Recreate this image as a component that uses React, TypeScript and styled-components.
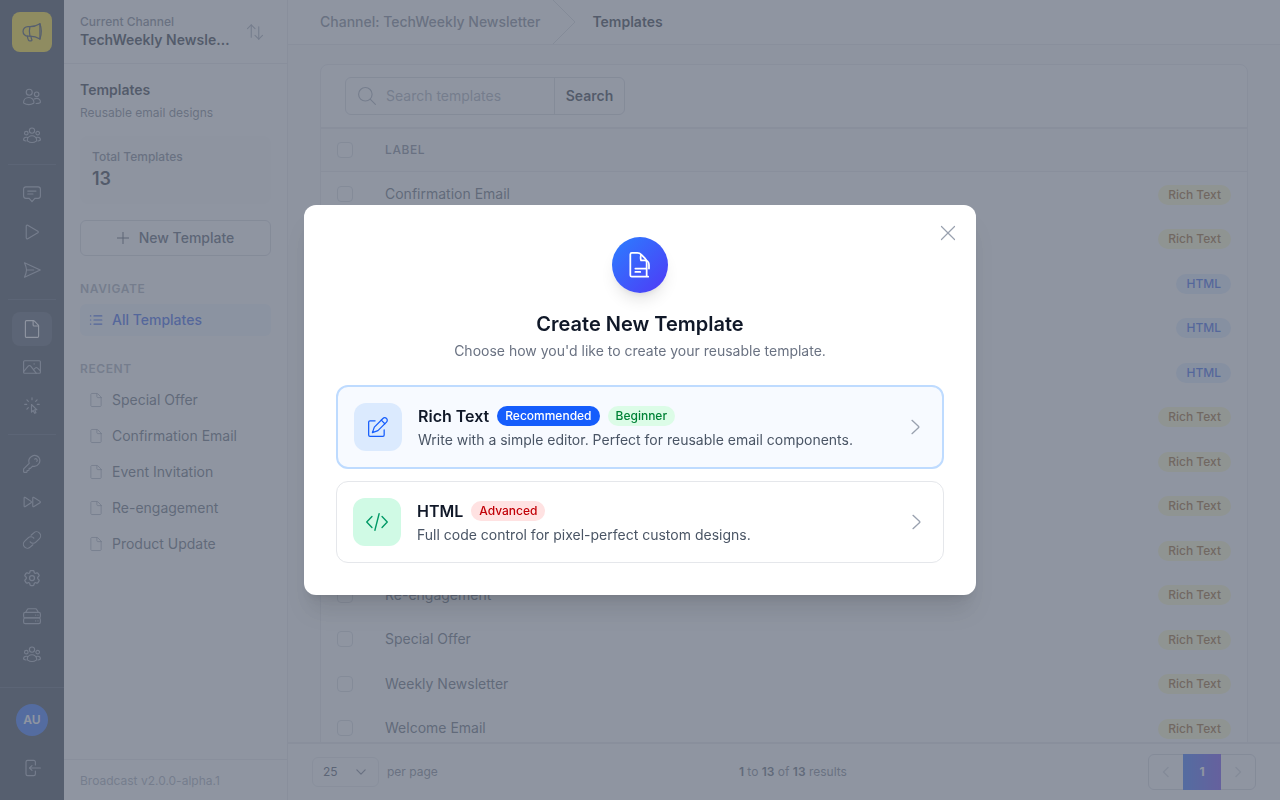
import React from "react";
import styled, { createGlobalStyle, css } from "styled-components";
import { HiOutlineCog6Tooth } from "react-icons/hi2";

const GlobalStyle = createGlobalStyle`
  *, *::before, *::after { box-sizing: border-box; }
  body {
    margin: 0;
    font-family: Inter, "Liberation Sans", sans-serif;
    font-size: 14px;
    line-height: 20px;
    color: #101828;
    background: #f9fafb;
  }
  button, input, select { font: inherit; color: inherit; margin: 0; }
  button { cursor: pointer; background: none; border: 0; padding: 0; }
  a { color: inherit; text-decoration: none; }
  h1, h2, h3, p, ul { margin: 0; padding: 0; font: inherit; list-style: none; }
`;

/* ---------- icons ---------- */

const Svg = styled.svg<{ $size: number; $weight: number }>`
  width: ${(p) => p.$size}px;
  height: ${(p) => p.$size}px;
  flex: none;
  display: block;
  overflow: visible;
  fill: none;
  stroke: currentColor;
  stroke-width: ${(p) => p.$weight};
  stroke-linecap: round;
  stroke-linejoin: round;
`;

const paths: Record<string, string[]> = {
  megaphone: [
    "M9.5 5.5H7a5.75 5.75 0 0 0 0 11.5h2.5c4.4 0 8.500 1.200 12 3.500V2c-3.500 2.300-7.600 3.500-12 3.500z",
    "M9.500 5.500c-.9 3.700-.9 7.800 0 11.500",
    "M21.500 2c2 5.500 2 13 0 18.500",
    "M6.500 17c.1 1.800.600 3.400 1.300 4.800.300.600.900.900 1.600.900h1.500c.8 0 1.300-.8.9-1.500-.6-1.200-1-2.600-1-4.100",
  ],
  users: [
    "M4.300 5.700a4 4 0 1 0 8 0 4 4 0 1 0-8 0z",
    "M15.200 8.400a3 3 0 1 0 6 0 3 3 0 1 0-6 0z",
    "M7.700 12.600c-3.900 0-6.900 2.900-6.900 6.600 0 .5.200.9.600 1.200 1.800 1.200 4 1.800 6.300 1.800s4.500-.6 6.300-1.800c.400-.3.600-.7.600-1.200 0-3.700-3-6.600-6.900-6.600z",
    "M15 14.700c.900-.6 2-.900 3.200-.9 2.800 0 5 2.200 5 4.900 0 .4-.2.8-.5.900-1.300.700-3 1.100-5.200 1.100",
  ],
  team: [
    "M8.500 6.100a3.500 3.500 0 1 0 7 0 3.500 3.500 0 1 0-7 0z",
    "M2 9.500a2.400 2.400 0 1 0 4.800 0 2.400 2.400 0 1 0-4.800 0z",
    "M17.200 9.500a2.400 2.400 0 1 0 4.800 0 2.400 2.400 0 1 0-4.800 0z",
    "M12 13c-3.600 0-6.300 2.600-6.300 5.900 0 .5.200.9.600 1.200 1.600 1.200 3.500 1.900 5.700 1.900s4.100-.7 5.700-1.900c.4-.3.6-.7.6-1.200 0-3.300-2.700-5.900-6.300-5.900z",
    "M6.300 15.400c-.6-.3-1.200-.4-1.900-.4-2 0-3.600 1.400-3.600 3.200 0 .4.200.7.500.9.700.5 1.600.8 2.700.9",
    "M17.700 15.400c.6-.3 1.200-.4 1.900-.4 2 0 3.600 1.400 3.600 3.200 0 .4-.2.7-.5.900-.7.5-1.600.8-2.700.9",
  ],
  chat: [
    "M20.200 2.500H3.800c-1.700 0-3 1.300-3 3v9.300c0 1.700 1.300 3 3 3h4.400l3.800 4.400 3.800-4.400h4.400c1.700 0 3-1.300 3-3V5.500c0-1.700-1.300-3-3-3z",
    "M6.300 8.100h11",
    "M6.300 12h7",
  ],
  play: ["M4.300 4.200v15.600c0 1 1.100 1.600 2 1.100l13.500-7.800c.8-.5.8-1.700 0-2.200L6.300 3.100c-.9-.5-2 .1-2 1.100z"],
  send: ["M2 2.300 23 12 2 21.700C3.500 18.500 4.500 15.300 4.700 12 4.500 8.700 3.500 5.500 2 2.300z", "M4.700 12h9.500"],
  file: [
    "M20.800 7.800v13.900c0 .8-.7 1.500-1.500 1.500H4.700c-.8 0-1.500-.7-1.500-1.500V2.300c0-.8.7-1.500 1.500-1.500h9.100c.4 0 .8.200 1.100.4l5.500 5.500c.2.300.4.700.4 1.100z",
    "M13.500.8v5.700c0 .8.700 1.500 1.500 1.500h5.700",
  ],
  image: [
    "M2.300 3.600h19.400c.8 0 1.500.7 1.500 1.500v13.800c0 .8-.7 1.500-1.500 1.500H2.300c-.8 0-1.500-.7-1.500-1.500V5.100c0-.8.7-1.500 1.500-1.500z",
    "M.8 18.300l6.100-7.400c.9-1.100 2.500-1.100 3.400 0l7.500 9.500",
    "M14 15.600l2.200-2.100c.9-.9 2.300-.9 3.200 0l3.800 3.600",
    "M14.700 7.900h.3",
  ],
  click: [
    "M11.300 11.300v10.200l2.300-2.300 1.900 3.900 1.800-.9-1.800-3.800h3.100z",
    "M12 2.300v2.600", "M5.200 5.200l1.900 1.900", "M2.300 11.200h2.600", "M5.200 17.500l1.900-1.900", "M18.800 5.200l-1.900 1.900", "M19 11.200h2.600",
  ],
  key: [
    "M21 3a7.700 7.700 0 0 0-12.700 8.100L1.200 18.200c-.300.300-.4.600-.4 1v3.200c0 .5.400.8.800.8h3c.5 0 .8-.4.8-.8v-1.800h1.900c.4 0 .8-.4.8-.8v-1.900h1.800l3-3A7.700 7.700 0 0 0 21 3z",
    "M15.600 5.600a1.900 1.900 0 0 1 2.800 2.800",
  ],
  forward: [
    "M1.500 6.700v10.600c0 .8.900 1.300 1.600.8l7.700-5.200c.6-.4.6-1.300 0-1.700L3.100 5.900c-.7-.5-1.600 0-1.600.8z",
    "M13 6.700v10.600c0 .8.900 1.300 1.600.8l8.100-5.200c.6-.4.6-1.300 0-1.700l-8.100-5.300c-.7-.5-1.600 0-1.600.8z",
  ],
  link: [
    "M9.600 14.400a5 5 0 0 0 7.500.500l4.600-4.500a5.200 5.200 0 0 0-7.300-8l-3.600 3.300",
    "M14.400 9.600a5 5 0 0 0-7.500-.5l-4.600 4.500a5.200 5.200 0 0 0 7.300 8l3.600-3.300",
  ],
  server: [
    "M3.700 7l2-3.700c.3-.6.900-1 1.600-1h9.400c.7 0 1.300.4 1.600 1l2 3.700",
    "M3 7.200h18c1.200 0 2.200 1 2.200 2.200v2.800c0 1.200-1 2.200-2.200 2.200H3c-1.200 0-2.200-1-2.200-2.200V9.400c0-1.200 1-2.200 2.200-2.200z",
    "M3 14.700h18c1.200 0 2.200 1 2.200 2.200V20c0 1.200-1 2.200-2.200 2.200H3c-1.200 0-2.200-1-2.200-2.200v-3.100c0-1.200 1-2.200 2.200-2.200z",
    "M16.800 10.800h.1", "M19.900 10.800h.1", "M16.800 18.500h.1", "M19.900 18.500h.1",
  ],
  logout: [
    "M16.500 8V4c0-1.200-1-2.200-2.200-2.200H6.200C5 1.800 4 2.800 4 4v16c0 1.200 1 2.200 2.200 2.200h8.100c1.200 0 2.200-1 2.200-2.200v-4",
    "M23.200 12H8.700", "M12 8.700L8.700 12l3.300 3.300",
  ],
  swap: ["M7 19V2.500", "M2 7.500l5-5 5 5", "M17 5v16.500", "M12 16.500l5 5 5-5"],
  list: ["M8.500 5h13.500", "M8.500 12h13.500", "M8.500 19h13.500", "M2.500 5h.6", "M2.500 12h.6", "M2.500 19h.6"],
  plus: ["M12 .8v22.400", "M.8 12h22.400"],
  search: ["M.8 9.700a9 9 0 1 0 18 0 9 9 0 1 0-18 0z", "M16.200 16.200l7 7"],
  close: ["M.8.8l22.400 22.400", "M23.200.8L.8 23.200"],
  right: ["M6 2l10 9.300c.5.400.5 1 0 1.400L6 22"],
  left: ["M16 3l-9 9 9 9"],
  next: ["M8 3l9 9-9 9"],
  down: ["M2 7l10 10L22 7"],
  template: [
    "M19 22H5c-.7 0-1.300-.6-1.300-1.300V3c0-.7.600-1.300 1.300-1.300h4.700c1.300 0 2.500.500 3.400 1.400l3.200 3.200c.9.9 1.400 2 1.400 3.300V22",
    "M12.900 3.400c-.5 1.600-.5 3.200 0 4.700h3.200c2 0 3.600 1.600 3.600 3.600V15",
    "M8 15h9.500", "M8 17.900h4.200",
  ],
  edit: [
    "M8.500 4.600H2.300c-.8 0-1.500.7-1.500 1.500v15.600c0 .8.700 1.500 1.500 1.500h15.600c.8 0 1.500-.7 1.500-1.500v-6.200",
    "M22.200 1.800a3 3 0 0 0-4.300 0L7.600 12.100 5.300 18.700l6.600-2.300L22.200 6.100a3 3 0 0 0 0-4.300z",
    "M15.900 3.800l4.300 4.300",
  ],
  code: ["M6.500 6L.8 12l5.700 6", "M17.500 6l5.700 6-5.700 6", "M14.300 3L9.700 21"],
};

const Icon = ({ name, size = 18, weight = 1.5 }: { name: string; size?: number; weight?: number }) => (
  <Svg $size={size} $weight={weight} viewBox="0 0 24 24" aria-hidden="true">
    {paths[name].map((d) => (
      <path key={d} d={d} />
    ))}
  </Svg>
);

/* ---------- shell ---------- */

const Shell = styled.div`
  display: flex;
  height: 100vh;
  overflow: hidden;
`;

const Rail = styled.nav`
  width: 64px;
  flex: none;
  display: flex;
  flex-direction: column;
  background: #1e2939;
`;

const Logo = styled.a`
  flex: none;
  display: grid;
  place-items: center;
  width: 40px;
  height: 40px;
  margin: 12px;
  border-radius: 8px;
  background: #fddc00;
  color: #1e2939;
`;

const RailGroups = styled.div`
  flex: 1;
  padding: 16px 8px;
`;

const RailGroup = styled.div`
  display: flex;
  flex-direction: column;
  align-items: center;
  gap: 4px;
  & + & {
    border-top: 1px solid #364153;
    margin-top: 12px;
    padding-top: 12px;
  }
`;

const RailLink = styled.a<{ $active?: boolean }>`
  display: grid;
  place-items: center;
  width: 40px;
  height: 34px;
  border-radius: 8px;
  color: #99a1af;
  ${(p) =>
    p.$active &&
    css`
      background: #364153;
      color: #ffffff;
    `}
`;

const RailFooter = styled.div`
  display: flex;
  flex-direction: column;
  align-items: center;
  gap: 15px;
  padding: 16px 0 15px;
  border-top: 1px solid #364153;
`;

const Avatar = styled.a`
  display: grid;
  place-items: center;
  width: 32px;
  height: 32px;
  border-radius: 16px;
  background: #155dfc;
  color: #ffffff;
  font-size: 12px;
  font-weight: 600;
`;

/* ---------- section sidebar ---------- */

const Side = styled.aside`
  width: 224px;
  flex: none;
  display: flex;
  flex-direction: column;
  background: #ffffff;
  border-right: 1px solid #e5e7eb;
`;

const Channel = styled.div`
  display: flex;
  align-items: center;
  justify-content: space-between;
  height: 64px;
  padding: 0 16px;
  border-bottom: 1px solid #e5e7eb;
`;

const ChannelText = styled.div`
  min-width: 0;
  flex: 1;
  padding-right: 8px;
`;

const Caption = styled.p<{ $medium?: boolean }>`
  font-size: 12px;
  line-height: 16px;
  font-weight: ${(p) => (p.$medium ? 500 : 400)};
  color: #6a7282;
`;

const ChannelName = styled.p`
  font-weight: 600;
  white-space: nowrap;
  overflow: hidden;
  text-overflow: ellipsis;
`;

const SwapButton = styled.button`
  padding: 8px;
  margin-right: -1px;
  color: #99a1af;
`;

const SideBody = styled.div`
  flex: 1;
  padding: 16px;
`;

const SideTitle = styled.h2`
  font-weight: 600;
  margin-bottom: 5px;
`;

const Stat = styled.div`
  margin: 15px 0 16px;
  padding: 13px 12px 11px;
  border-radius: 8px;
  background: #f9fafb;
`;

const StatValue = styled.p`
  font-size: 18px;
  line-height: 28px;
  font-weight: 600;
`;

const NewButton = styled.button`
  display: flex;
  align-items: center;
  justify-content: center;
  gap: 10px;
  width: 100%;
  height: 36px;
  border: 1px solid #d1d5dc;
  border-radius: 6px;
  font-weight: 500;
  color: #364153;
`;

const SideHeading = styled.h3`
  margin: 25px 0 7px;
  font-size: 12px;
  line-height: 16px;
  font-weight: 600;
  letter-spacing: 0.05em;
  text-transform: uppercase;
  color: #99a1af;
`;

const SideList = styled.ul`
  display: flex;
  flex-direction: column;
  gap: 4px;
`;

const SideLink = styled.a<{ $active?: boolean }>`
  display: flex;
  align-items: center;
  gap: 8px;
  height: 32px;
  padding: 0 8px;
  border-radius: 6px;
  color: #4a5565;
  svg {
    margin: 0 1px;
    color: #99a1af;
  }
  ${(p) =>
    p.$active &&
    css`
      background: #eff6ff;
      color: #1447e6;
      font-weight: 500;
      svg {
        color: #1447e6;
      }
    `}
`;

const SideFooter = styled.footer`
  padding: 13px 16px 11px;
  border-top: 1px solid #e5e7eb;
  font-size: 12px;
  line-height: 16px;
  color: #99a1af;
`;

/* ---------- main column ---------- */

const Main = styled.main`
  flex: 1;
  min-width: 0;
  display: flex;
  flex-direction: column;
`;

const Crumbs = styled.nav`
  flex: none;
  display: flex;
  align-items: center;
  height: 45px;
  padding: 0 32px;
  background: #ffffff;
  border-bottom: 1px solid #e5e7eb;
  font-weight: 500;
  color: #6a7282;
`;

const CrumbArrow = styled.svg`
  width: 24px;
  height: 44px;
  margin: 0 16px 0 12px;
  fill: none;
  stroke: #d1d5dc;
`;

const CurrentCrumb = styled.span`
  font-weight: 600;
  color: #101828;
`;

const Scroller = styled.div`
  flex: 1;
  min-height: 0;
  overflow: hidden;
  padding: 19px 32px 0;
`;

const Panel = styled.section`
  background: #ffffff;
  border: 1px solid #e5e7eb;
  border-radius: 8px;
`;

const Toolbar = styled.div`
  padding: 12px 24px;
  border-bottom: 1px solid #e5e7eb;
`;

const SearchForm = styled.form`
  display: flex;
  width: 280px;
  height: 38px;
  border: 1px solid #d1d5dc;
  border-radius: 6px;
`;

const SearchLabel = styled.label`
  flex: 1;
  min-width: 0;
  display: flex;
  align-items: center;
  gap: 10px;
  padding-left: 12px;
  color: #99a1af;
`;

const SearchInput = styled.input`
  flex: 1;
  min-width: 0;
  border: 0;
  padding: 0;
  background: none;
  outline: 0;
  &::placeholder {
    color: #99a1af;
  }
`;

const SearchButton = styled.button`
  width: 70px;
  border-left: 1px solid #d1d5dc;
  font-weight: 600;
`;

const Table = styled.table`
  width: 100%;
  border-collapse: separate;
  border-spacing: 0;
  th {
    height: 44px;
    padding: 0;
    background: #f9fafb;
    border-top: 1px solid #e5e7eb;
    border-bottom: 1px solid #e5e7eb;
    text-align: left;
    font-size: 12px;
    line-height: 16px;
    font-weight: 500;
    letter-spacing: 0.05em;
    color: #6a7282;
    text-transform: uppercase;
  }
  td {
    height: 44px;
    padding: 0;
    color: #4a5565;
  }
  tr:nth-child(even) td {
    height: 45px;
  }
  th:first-child,
  td:first-child {
    width: 64px;
    padding-left: 16px;
  }
  th:last-child,
  td:last-child {
    width: 120px;
    padding-right: 16px;
    text-align: right;
  }
`;

const Check = styled.input`
  appearance: none;
  display: block;
  width: 16px;
  height: 16px;
  margin: 0;
  border: 1px solid #d1d5dc;
  border-radius: 4px;
  background: #ffffff;
`;

const KindBadge = styled.span<{ $html: boolean }>`
  display: inline-block;
  padding: 0 10px;
  border-radius: 10px;
  font-size: 12px;
  line-height: 20px;
  font-weight: 500;
  vertical-align: middle;
  background: ${(p) => (p.$html ? "#dbeafe" : "#fef9c2")};
  color: ${(p) => (p.$html ? "#1447e6" : "#894b00")};
`;

const Pager = styled.footer`
  flex: none;
  display: flex;
  align-items: center;
  justify-content: space-between;
  height: 58px;
  padding: 0 24px;
  background: #ffffff;
  border-top: 2px solid #e5e7eb;
  font-size: 12px;
  color: #6a7282;
`;

const PerPage = styled.label`
  display: flex;
  align-items: center;
  gap: 8px;
`;

const SelectBox = styled.span`
  display: grid;
  align-items: center;
  width: 67px;
  height: 30px;
  border: 1px solid #e5e7eb;
  border-radius: 6px;
  > * {
    grid-area: 1 / 1;
  }
  svg {
    justify-self: end;
    margin-right: 12px;
    pointer-events: none;
  }
`;

const Select = styled.select`
  appearance: none;
  width: 100%;
  height: 28px;
  padding: 0 10px;
  border: 0;
  background: none;
  color: #364153;
`;

const Results = styled.p`
  strong {
    font-weight: 600;
    color: #4a5565;
  }
`;

const Pages = styled.div`
  display: flex;
  height: 36px;
  border: 1px solid #d1d5dc;
  border-radius: 6px;
`;

const PageButton = styled.button<{ $current?: boolean }>`
  display: grid;
  place-items: center;
  width: 34px;
  color: #d1d5dc;
  ${(p) =>
    p.$current &&
    css`
      width: 38px;
      margin: -1px 0;
      color: #ffffff;
      font-weight: 700;
      background: linear-gradient(to right, #155dfc, #5b30f0);
    `}
`;

/* ---------- dialog ---------- */

const Backdrop = styled.div`
  position: fixed;
  inset: 0;
  display: grid;
  place-items: center;
  padding: 16px;
  background: rgba(106, 114, 130, 0.75);
`;

const Dialog = styled.div`
  position: relative;
  width: 100%;
  max-width: 672px;
  padding: 32px;
  border-radius: 12px;
  background: #ffffff;
  box-shadow: 0 20px 25px -5px rgba(0, 0, 0, 0.1), 0 8px 10px -6px rgba(0, 0, 0, 0.1);
`;

const CloseButton = styled.button`
  position: absolute;
  top: 16px;
  right: 16px;
  padding: 5px;
  color: #99a1af;
`;

const DialogHead = styled.header`
  display: flex;
  flex-direction: column;
  align-items: center;
  margin-bottom: 24px;
  text-align: center;
`;

const DialogIcon = styled.div`
  display: grid;
  place-items: center;
  width: 56px;
  height: 56px;
  margin-bottom: 17px;
  border-radius: 28px;
  color: #ffffff;
  background: linear-gradient(to bottom right, #2b7fff, #4f39f6);
  box-shadow: 0 10px 15px -3px rgba(0, 0, 0, 0.1), 0 4px 6px -4px rgba(0, 0, 0, 0.1);
`;

const DialogTitle = styled.h1`
  font-size: 20px;
  line-height: 28px;
  font-weight: 600;
  margin-bottom: 3px;
`;

const DialogText = styled.p`
  color: #6a7282;
`;

const Options = styled.div`
  display: flex;
  flex-direction: column;
  gap: 12px;
`;

const Option = styled.a<{ $primary?: boolean }>`
  display: flex;
  align-items: center;
  gap: 16px;
  padding: 16px;
  border: ${(p) => (p.$primary ? "2px solid #bedbff" : "1px solid #e5e7eb")};
  border-radius: 12px;
  background: ${(p) => (p.$primary ? "#f7faff" : "#ffffff")};
  > svg {
    margin-right: 2px;
    color: #99a1af;
  }
`;

const OptionIcon = styled.div<{ $tone: "blue" | "green" }>`
  flex: none;
  display: grid;
  place-items: center;
  width: 48px;
  height: 48px;
  border-radius: 12px;
  background: ${(p) => (p.$tone === "blue" ? "#dbeafe" : "#d0fae5")};
  color: ${(p) => (p.$tone === "blue" ? "#155dfc" : "#009966")};
`;

const OptionBody = styled.div`
  flex: 1;
  min-width: 0;
`;

const OptionTitle = styled.div`
  display: flex;
  align-items: center;
  gap: 8px;
  margin-bottom: 2px;
  h2 {
    font-size: 16px;
    line-height: 24px;
    font-weight: 600;
  }
`;

const tagColors = {
  solid: ["#155dfc", "#ffffff"],
  green: ["#dcfce7", "#008236"],
  red: ["#ffe2e2", "#c10007"],
};

const Tag = styled.span<{ $tone: keyof typeof tagColors }>`
  padding: 0 8px;
  border-radius: 10px;
  font-size: 12px;
  line-height: 20px;
  font-weight: 500;
  background: ${(p) => tagColors[p.$tone][0]};
  color: ${(p) => tagColors[p.$tone][1]};
`;

const OptionText = styled.p`
  color: #4a5565;
`;

/* ---------- data ---------- */

const railGroups: [string, string][][] = [
  [["users", "Subscribers"], ["team", "Segments"]],
  [["chat", "Broadcasts"], ["play", "Sequences"], ["send", "Transactional"]],
  [["file", "Templates"], ["image", "Media"], ["click", "Opt-in forms"]],
  [["key", "Access tokens"], ["forward", "Webhooks"], ["link", "Links"], ["gear", "Settings"], ["server", "Servers"], ["team", "Members"]],
];

const recent = ["Special Offer", "Confirmation Email", "Event Invitation", "Re-engagement", "Product Update"];

const templates: [string, boolean][] = [
  ["Confirmation Email", false],
  ["Event Invitation", false],
  ["HTML Announcement", true],
  ["HTML Newsletter", true],
  ["HTML Promotion", true],
  ["Feedback Request", false],
  ["Monthly Digest", false],
  ["Onboarding", false],
  ["Product Update", false],
  ["Re-engagement", false],
  ["Special Offer", false],
  ["Weekly Newsletter", false],
  ["Welcome Email", false],
];

export default function App() {
  return (
    <>
      <GlobalStyle />
      <Shell>
        <Rail aria-label="Main">
          <Logo href="#" aria-label="Broadcast">
            <Icon name="megaphone" size={20} />
          </Logo>
          <RailGroups>
            {railGroups.map((group, i) => (
              <RailGroup key={i}>
                {group.map(([icon, label]) => (
                  <RailLink key={label} href="#" aria-label={label} $active={icon === "file"}>
                    {icon === "gear" ? <HiOutlineCog6Tooth size={20} /> : <Icon name={icon} />}
                  </RailLink>
                ))}
              </RailGroup>
            ))}
          </RailGroups>
          <RailFooter>
            <Avatar href="#">AU</Avatar>
            <RailLink href="#" aria-label="Sign out">
              <Icon name="logout" />
            </RailLink>
          </RailFooter>
        </Rail>

        <Side>
          <Channel>
            <ChannelText>
              <Caption $medium>Current Channel</Caption>
              <ChannelName>TechWeekly Newsletter</ChannelName>
            </ChannelText>
            <SwapButton aria-label="Switch channel">
              <Icon name="swap" />
            </SwapButton>
          </Channel>
          <SideBody>
            <SideTitle>Templates</SideTitle>
            <Caption>Reusable email designs</Caption>
            <Stat>
              <Caption $medium>Total Templates</Caption>
              <StatValue>13</StatValue>
            </Stat>
            <NewButton>
              <Icon name="plus" size={12} weight={2} />
              New Template
            </NewButton>
            <SideHeading>Navigate</SideHeading>
            <SideList>
              <li>
                <SideLink href="#" $active>
                  <Icon name="list" size={14} weight={2} />
                  All Templates
                </SideLink>
              </li>
            </SideList>
            <SideHeading>Recent</SideHeading>
            <SideList>
              {recent.map((name) => (
                <li key={name}>
                  <SideLink href="#">
                    <Icon name="file" size={14} />
                    {name}
                  </SideLink>
                </li>
              ))}
            </SideList>
          </SideBody>
          <SideFooter>Broadcast v2.0.0-alpha.1</SideFooter>
        </Side>

        <Main>
          <Crumbs aria-label="Breadcrumb">
            <a href="#">Channel: TechWeekly Newsletter</a>
            <CrumbArrow viewBox="0 0 24 44" aria-hidden="true">
              <path d="M1 0l22 22L1 44" />
            </CrumbArrow>
            <CurrentCrumb>Templates</CurrentCrumb>
          </Crumbs>
          <Scroller>
            <Panel>
              <Toolbar>
                <SearchForm>
                  <SearchLabel>
                    <Icon name="search" />
                    <SearchInput type="text" placeholder="Search templates" aria-label="Search templates" />
                  </SearchLabel>
                  <SearchButton type="button">Search</SearchButton>
                </SearchForm>
              </Toolbar>
              <Table>
                <thead>
                  <tr>
                    <th><Check type="checkbox" aria-label="Select all" /></th>
                    <th>Label</th>
                    <th />
                  </tr>
                </thead>
                <tbody>
                  {templates.map(([name, html]) => (
                    <tr key={name}>
                      <td><Check type="checkbox" aria-label={"Select " + name} /></td>
                      <td>{name}</td>
                      <td><KindBadge $html={html}>{html ? "HTML" : "Rich Text"}</KindBadge></td>
                    </tr>
                  ))}
                </tbody>
              </Table>
            </Panel>
          </Scroller>
          <Pager>
            <PerPage>
              <SelectBox>
                <Select defaultValue="25">
                  <option>25</option>
                  <option>50</option>
                </Select>
                <Icon name="down" size={10} weight={3} />
              </SelectBox>
              per page
            </PerPage>
            <Results>
              <strong>1</strong> to <strong>13</strong> of <strong>13</strong> results
            </Results>
            <Pages>
              <PageButton aria-label="Previous page"><Icon name="left" size={12} weight={3} /></PageButton>
              <PageButton $current>1</PageButton>
              <PageButton aria-label="Next page"><Icon name="next" size={12} weight={3} /></PageButton>
            </Pages>
          </Pager>
        </Main>
      </Shell>

      <Backdrop>
        <Dialog role="dialog" aria-modal="true" aria-labelledby="dialog-title">
          <CloseButton aria-label="Close">
            <Icon name="close" size={14} weight={2} />
          </CloseButton>
          <DialogHead>
            <DialogIcon>
              <Icon name="template" size={28} />
            </DialogIcon>
            <DialogTitle id="dialog-title">Create New Template</DialogTitle>
            <DialogText>Choose how you'd like to create your reusable template.</DialogText>
          </DialogHead>
          <Options>
            <Option href="#" $primary>
              <OptionIcon $tone="blue"><Icon name="edit" size={20} /></OptionIcon>
              <OptionBody>
                <OptionTitle>
                  <h2>Rich Text</h2>
                  <Tag $tone="solid">Recommended</Tag>
                  <Tag $tone="green">Beginner</Tag>
                </OptionTitle>
                <OptionText>Write with a simple editor. Perfect for reusable email components.</OptionText>
              </OptionBody>
              <Icon name="right" size={16} weight={2} />
            </Option>
            <Option href="#">
              <OptionIcon $tone="green"><Icon name="code" size={22} /></OptionIcon>
              <OptionBody>
                <OptionTitle>
                  <h2>HTML</h2>
                  <Tag $tone="red">Advanced</Tag>
                </OptionTitle>
                <OptionText>Full code control for pixel-perfect custom designs.</OptionText>
              </OptionBody>
              <Icon name="right" size={16} weight={2} />
            </Option>
          </Options>
        </Dialog>
      </Backdrop>
    </>
  );
}
